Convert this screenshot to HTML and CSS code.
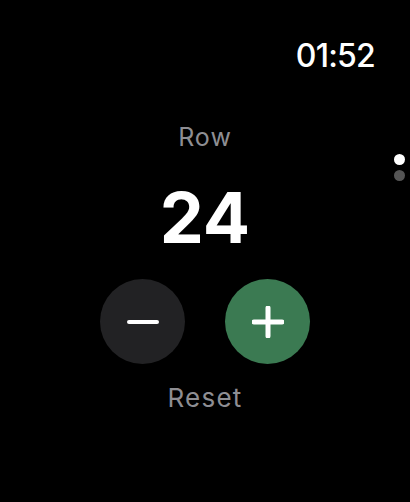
FILE: index.html
```html
<!DOCTYPE html>
<html lang="en">
<head>
    <meta charset="UTF-8">
    <meta name="viewport" content="width=device-width, initial-scale=1.0">
    <title>Row Counter</title>
    <link rel="stylesheet" href="styles.css">
</head>
<body>
    <div class="screen">
        <!-- Status bar -->
        <div class="status">
            <span class="time">01:52</span>
        </div>

        <!-- Page indicator -->
        <div class="page-dots">
            <span class="dot active"></span>
            <span class="dot"></span>
        </div>

        <!-- Counter -->
        <div class="counter">
            <div class="label">Row</div>
            <div class="count">24</div>
            <div class="buttons">
                <button class="round-btn minus" aria-label="Decrease">
                    <svg width="32" height="32" viewBox="0 0 32 32">
                        <line x1="2" y1="16" x2="30" y2="16" stroke="#fff" stroke-width="4" stroke-linecap="round" />
                    </svg>
                </button>
                <button class="round-btn plus" aria-label="Increase">
                    <svg width="32" height="32" viewBox="0 0 32 32">
                        <line x1="2" y1="16" x2="30" y2="16" stroke="#fff" stroke-width="5" stroke-linecap="round" />
                        <line x1="16" y1="2" x2="16" y2="30" stroke="#fff" stroke-width="5" stroke-linecap="round" />
                    </svg>
                </button>
            </div>
            <div class="reset">Reset</div>
        </div>
    </div>
</body>
</html>
```

FILE: styles.css
```css
body {
    margin: 0;
    padding: 0;
    background-color: #000;
    font-family: Inter, "Noto Sans", sans-serif;
    color: #fff;
}

.screen {
    position: relative;
    width: 410px;
    height: 502px;
    overflow: hidden;
    display: flex;
    flex-direction: column;
}

.status {
    display: flex;
    justify-content: flex-end;
    padding: 40px 35px 0 0;
}

.time {
    font-size: 32px;
    line-height: 32px;
    font-weight: 500;
    letter-spacing: -0.8px;
}

.page-dots {
    position: absolute;
    top: 154px;
    right: 5px;
    display: flex;
    flex-direction: column;
    gap: 5px;
}

.dot {
    width: 11px;
    height: 11px;
    border-radius: 50%;
    background-color: #555;
}

.dot.active {
    background-color: #fff;
}

.counter {
    display: flex;
    flex-direction: column;
    align-items: center;
    margin-top: 53px;
}

.label {
    font-size: 25px;
    line-height: 25px;
    letter-spacing: 1px;
    color: #8e8e93;
}

.count {
    margin-top: 33px;
    font-size: 70px;
    line-height: 70px;
    font-weight: 700;
}

.buttons {
    display: flex;
    gap: 40px;
    margin-top: 26px;
}

.round-btn {
    width: 85px;
    height: 85px;
    border: none;
    border-radius: 50%;
    padding: 0;
    display: flex;
    align-items: center;
    justify-content: center;
}

.minus {
    background-color: #222224;
}

.plus {
    background-color: #3b7a52;
}

.reset {
    margin-top: 21px;
    font-size: 26px;
    line-height: 26px;
    letter-spacing: 1.2px;
    color: #8e8e93;
}
```
